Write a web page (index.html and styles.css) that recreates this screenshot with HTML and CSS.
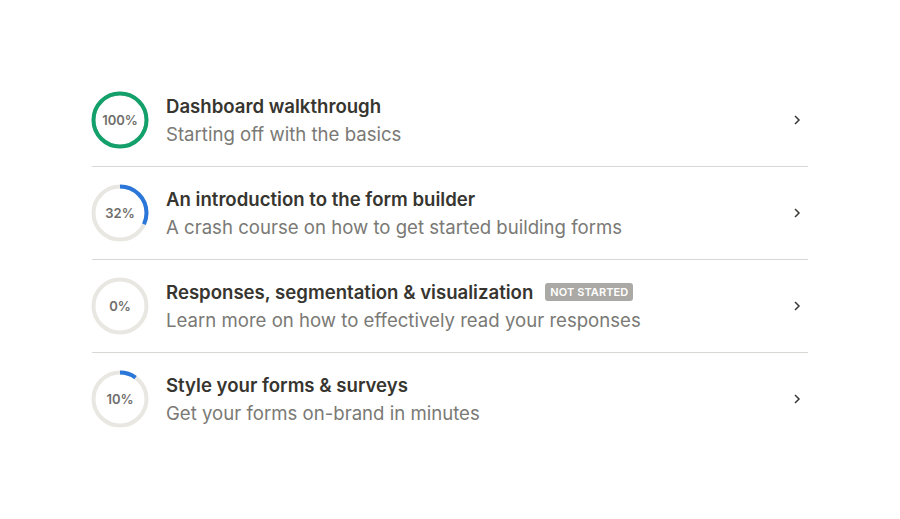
FILE: index.html
```html
<!DOCTYPE html>
<html lang="en">
<head>
    <meta charset="UTF-8">
    <meta name="viewport" content="width=900, initial-scale=1.0">
    <title>Guides</title>
    <link rel="stylesheet" href="styles.css">
</head>
<body>
    <div class="guides">
        <a class="guide" href="#">
            <svg class="progress" viewBox="0 0 58 58">
                <circle class="track" cx="29" cy="29" r="26.5"></circle>
                <circle class="bar done" cx="29" cy="29" r="26.5" pathLength="100" stroke-dasharray="100 100"></circle>
                <text x="29" y="29">100%</text>
            </svg>
            <div class="guide-text">
                <div class="guide-title">Dashboard walkthrough</div>
                <div class="guide-sub">Starting off with the basics</div>
            </div>
            <svg class="chevron" viewBox="0 0 16 16"><path d="M6 4l4 4-4 4"></path></svg>
        </a>
        <a class="guide" href="#">
            <svg class="progress" viewBox="0 0 58 58">
                <circle class="track" cx="29" cy="29" r="26.5"></circle>
                <circle class="bar" cx="29" cy="29" r="26.5" pathLength="100" stroke-dasharray="32 100"></circle>
                <text x="29" y="29">32%</text>
            </svg>
            <div class="guide-text">
                <div class="guide-title">An introduction to the form builder</div>
                <div class="guide-sub">A crash course on how to get started building forms</div>
            </div>
            <svg class="chevron" viewBox="0 0 16 16"><path d="M6 4l4 4-4 4"></path></svg>
        </a>
        <a class="guide" href="#">
            <svg class="progress" viewBox="0 0 58 58">
                <circle class="track" cx="29" cy="29" r="26.5"></circle>
                <text x="29" y="29">0%</text>
            </svg>
            <div class="guide-text">
                <div class="guide-title">Responses, segmentation &amp; visualization <span class="badge">Not started</span></div>
                <div class="guide-sub">Learn more on how to effectively read your responses</div>
            </div>
            <svg class="chevron" viewBox="0 0 16 16"><path d="M6 4l4 4-4 4"></path></svg>
        </a>
        <a class="guide" href="#">
            <svg class="progress" viewBox="0 0 58 58">
                <circle class="track" cx="29" cy="29" r="26.5"></circle>
                <circle class="bar" cx="29" cy="29" r="26.5" pathLength="100" stroke-dasharray="10 100"></circle>
                <text x="29" y="29">10%</text>
            </svg>
            <div class="guide-text">
                <div class="guide-title">Style your forms &amp; surveys</div>
                <div class="guide-sub">Get your forms on-brand in minutes</div>
            </div>
            <svg class="chevron" viewBox="0 0 16 16"><path d="M6 4l4 4-4 4"></path></svg>
        </a>
    </div>
</body>
</html>
```

FILE: styles.css
```css
body {
    font-family: 'Inter', 'Noto Sans', sans-serif;
    background-color: #fff;
    margin: 0;
    padding: 0;
    height: 100vh;
    display: flex;
    align-items: center;
    justify-content: center;
}
.guides {
    width: 716px;
}
.guide {
    display: flex;
    align-items: center;
    gap: 17px;
    padding: 17px 0;
    border-bottom: 1px solid #dad8d4;
    text-decoration: none;
}
.guide:last-child {
    border-bottom: none;
}
.progress {
    width: 58px;
    height: 58px;
    flex-shrink: 0;
    margin-left: -1px;
}
.progress circle {
    fill: none;
    stroke-width: 4;
}
.progress .track {
    stroke: #e9e7e2;
}
.progress .bar {
    stroke: #2a76d9;
    transform: rotate(-90deg);
    transform-origin: 29px 29px;
}
.progress .bar.done {
    stroke: #13a06b;
}
.progress text {
    font-family: 'Inter', sans-serif;
    font-size: 13px;
    font-weight: 600;
    fill: #6f6e6b;
    text-anchor: middle;
    dominant-baseline: central;
}
.guide-text {
    flex: 1;
    line-height: 28px;
    font-size: 18.6px;
}
.guide-title {
    color: #37352f;
    font-weight: 600;
    display: flex;
    align-items: center;
    gap: 12px;
}
.guide-sub {
    color: #7a7975;
}
.badge {
    background-color: #aba9a5;
    color: #fff;
    font-size: 11px;
    font-weight: 600;
    text-transform: uppercase;
    letter-spacing: 0.1px;
    line-height: 18px;
    padding: 0 5px;
    border-radius: 3px;
}
.chevron {
    width: 16px;
    height: 16px;
    margin-right: 3px;
    fill: none;
    stroke: #3a3937;
    stroke-width: 1.5;
}
```
